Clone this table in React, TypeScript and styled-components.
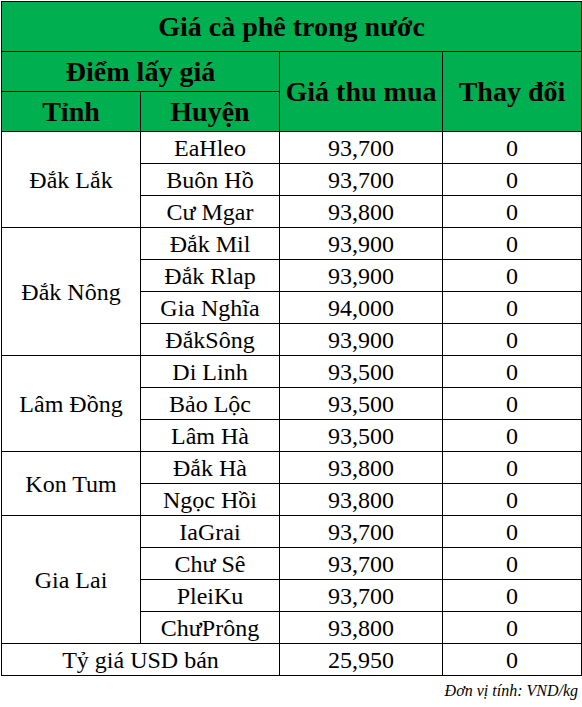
import React from 'react';
import styled, { createGlobalStyle } from 'styled-components';

const GlobalStyle = createGlobalStyle`
  html, body {
    margin: 0;
    padding: 0;
    background: #ffffff;
  }
  body {
    font-family: "Liberation Serif", "Times New Roman", serif;
    color: #000000;
  }
`;

const Page = styled.div`
  padding: 1px 0 0 1px;
  width: 581px;
`;

const Table = styled.table`
  width: 580px;
  border-collapse: collapse;
  table-layout: fixed;
  font-family: "Liberation Serif", "Times New Roman", serif;
`;

const HeadCell = styled.th<{ $h: number }>`
  background: #00b050;
  border: 1px solid #000;
  height: ${(p) => p.$h}px;
  padding: 0;
  font-size: 28px;
  font-weight: bold;
  text-align: center;
  vertical-align: middle;
  line-height: 1;
  white-space: nowrap;
`;

const Cell = styled.td`
  border: 1px solid #000;
  height: 31px;
  padding: 0;
  font-size: 24px;
  text-align: center;
  vertical-align: middle;
  line-height: 1;
  white-space: nowrap;
`;

const Note = styled.div`
  width: 577px;
  text-align: right;
  font-style: italic;
  font-size: 16px;
  padding-top: 6px;
`;

type District = { name: string; price: string; change: string };
type Province = { name: string; districts: District[] };

const provinces: Province[] = [
  {
    name: 'Đắk Lắk',
    districts: [
      { name: 'EaHleo', price: '93,700', change: '0' },
      { name: 'Buôn Hồ', price: '93,700', change: '0' },
      { name: 'Cư Mgar', price: '93,800', change: '0' },
    ],
  },
  {
    name: 'Đắk Nông',
    districts: [
      { name: 'Đắk Mil', price: '93,900', change: '0' },
      { name: 'Đắk Rlap', price: '93,900', change: '0' },
      { name: 'Gia Nghĩa', price: '94,000', change: '0' },
      { name: 'ĐắkSông', price: '93,900', change: '0' },
    ],
  },
  {
    name: 'Lâm Đồng',
    districts: [
      { name: 'Di Linh', price: '93,500', change: '0' },
      { name: 'Bảo Lộc', price: '93,500', change: '0' },
      { name: 'Lâm Hà', price: '93,500', change: '0' },
    ],
  },
  {
    name: 'Kon Tum',
    districts: [
      { name: 'Đắk Hà', price: '93,800', change: '0' },
      { name: 'Ngọc Hồi', price: '93,800', change: '0' },
    ],
  },
  {
    name: 'Gia Lai',
    districts: [
      { name: 'IaGrai', price: '93,700', change: '0' },
      { name: 'Chư Sê', price: '93,700', change: '0' },
      { name: 'PleiKu', price: '93,700', change: '0' },
      { name: 'ChưPrông', price: '93,800', change: '0' },
    ],
  },
];

export default function App() {
  return (
    <Page>
      <GlobalStyle />
      <Table>
        <colgroup>
          <col style={{ width: 139 }} />
          <col style={{ width: 139 }} />
          <col style={{ width: 163 }} />
          <col style={{ width: 139 }} />
        </colgroup>
        <thead>
          <tr>
            <HeadCell $h={49} colSpan={4}>Giá cà phê trong nước</HeadCell>
          </tr>
          <tr>
            <HeadCell $h={39} colSpan={2}>Điểm lấy giá</HeadCell>
            <HeadCell $h={39} rowSpan={2}>Giá thu mua</HeadCell>
            <HeadCell $h={39} rowSpan={2}>Thay đổi</HeadCell>
          </tr>
          <tr>
            <HeadCell $h={39}>Tỉnh</HeadCell>
            <HeadCell $h={39}>Huyện</HeadCell>
          </tr>
        </thead>
        <tbody>
          {provinces.map((p) =>
            p.districts.map((d, i) => (
              <tr key={p.name + d.name}>
                {i === 0 && <Cell rowSpan={p.districts.length}>{p.name}</Cell>}
                <Cell>{d.name}</Cell>
                <Cell>{d.price}</Cell>
                <Cell>{d.change}</Cell>
              </tr>
            ))
          )}
          <tr>
            <Cell colSpan={2}>Tỷ giá USD bán</Cell>
            <Cell>25,950</Cell>
            <Cell>0</Cell>
          </tr>
        </tbody>
      </Table>
      <Note>Đơn vị tính: VND/kg</Note>
    </Page>
  );
}
